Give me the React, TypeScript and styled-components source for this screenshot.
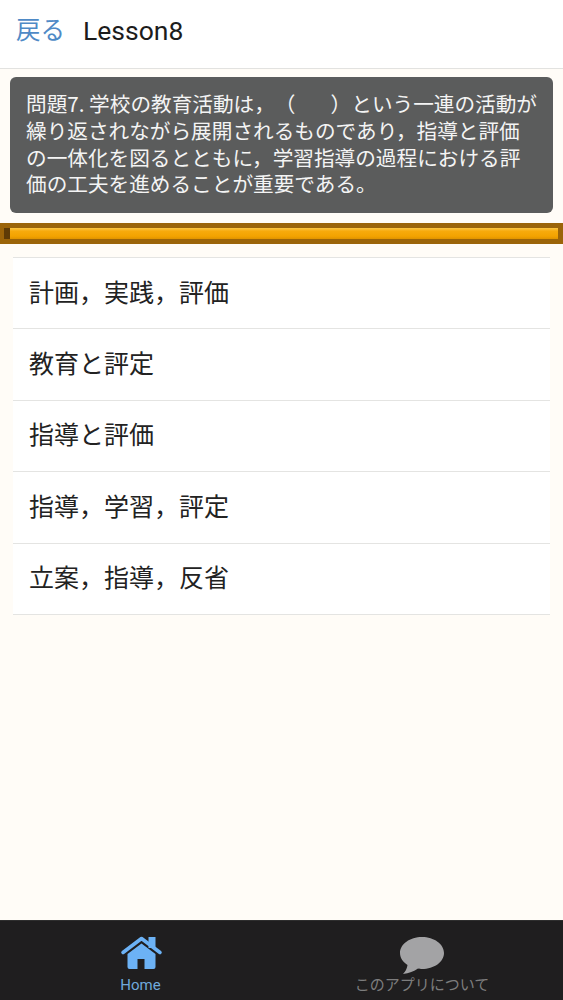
import styled, { createGlobalStyle } from "styled-components";

const GlobalStyle = createGlobalStyle`
  html, body {
    margin: 0;
    padding: 0;
    background: #fffcf7;
  }
  * {
    box-sizing: border-box;
  }
`;

const Page = styled.div`
  width: 563px;
  height: 1000px;
  display: flex;
  flex-direction: column;
  overflow: hidden;
  background: #fffcf7;
  font-family: "Roboto", "Noto Sans CJK JP", sans-serif;
`;

const Header = styled.header`
  height: 69px;
  flex: none;
  display: flex;
  align-items: center;
  gap: 18px;
  padding: 0 16px 6px;
  background: #ffffff;
  border-bottom: 1px solid #e2e2e0;
`;

const BackLink = styled.a`
  font-family: "Noto Sans CJK JP", sans-serif;
  font-size: 24.5px;
  line-height: 30px;
  color: #4f8ac6;
  margin-bottom: 5px;
`;

const Title = styled.h1`
  margin: 0;
  font-size: 26.5px;
  font-weight: 400;
  line-height: 30px;
  color: #1c1c1c;
`;

const Content = styled.main`
  flex: 1;
  display: flex;
  flex-direction: column;
  padding-top: 8px;
`;

const Question = styled.div`
  margin: 0 10px;
  height: 136px;
  padding: 13px 13px 0 16px;
  border-radius: 6px;
  background: #5b5c5c;
  color: #f4f4f4;
  font-family: "Noto Sans CJK JP", sans-serif;
  font-size: 20.65px;
  line-height: 26.8px;
  text-spacing-trim: space-all;
`;

const Track = styled.div`
  margin-top: 10px;
  height: 21px;
  flex: none;
  display: flex;
  align-items: center;
  padding: 0 5px 0 4px;
  background: #9b6409;
`;

const Knob = styled.div`
  width: 6px;
  height: 11px;
  flex: none;
  background: #5e3b06;
`;

const Fill = styled.div<{ $percent: number }>`
  width: ${(p) => p.$percent}%;
  height: 11px;
  background: linear-gradient(#fbc643 0%, #f7aa0c 30%, #f3a300 75%, #e09400 100%);
`;

const Choices = styled.ul`
  list-style: none;
  margin: 13px 13px 0;
  padding: 0;
  border-top: 1px solid #e4e4e2;
`;

const Choice = styled.li`
  height: 71.4px;
  display: flex;
  align-items: center;
  padding: 0 0 5px 16px;
  background: #ffffff;
  border-bottom: 1px solid #e4e4e2;
  color: #222222;
  font-family: "Noto Sans CJK JP", sans-serif;
  font-size: 25px;
  text-spacing-trim: space-all;
`;

const TabBar = styled.nav`
  height: 80px;
  flex: none;
  display: grid;
  grid-template-columns: 281px 1fr;
  background: #1f1e1f;
  border-top: 1px solid #2e2e2e;
`;

const Tab = styled.a<{ $active?: boolean }>`
  display: flex;
  flex-direction: column;
  align-items: center;
  padding-top: 15px;
  color: ${(p) => (p.$active ? "#6fa9dc" : "#7d7d7d")};
  font-family: "Roboto", "Noto Sans CJK JP", sans-serif;
  font-size: 15px;
  line-height: 18px;
`;

const TabIcon = styled.svg`
  width: 46px;
  height: 38px;
  display: block;
  margin-bottom: 2px;
`;

const question =
  "問題7. 学校の教育活動は，（\u3000\u2002\u2009）という一連の活動が繰り返されながら展開されるものであり，指導と評価の一体化を図るとともに，学習指導の過程における評価の工夫を進めることが重要である。";

const choices = ["計画，実践，評価", "教育と評定", "指導と評価", "指導，学習，評定", "立案，指導，反省"];

export default function App() {
  return (
    <Page>
      <GlobalStyle />
      <Header>
        <BackLink>戻る</BackLink>
        <Title>Lesson8</Title>
      </Header>
      <Content>
        <Question>{question}</Question>
        <Track>
          <Knob />
          <Fill $percent={100} />
        </Track>
        <Choices>
          {choices.map((c) => (
            <Choice key={c}>{c}</Choice>
          ))}
        </Choices>
      </Content>
      <TabBar>
        <Tab $active>
          <TabIcon viewBox="-2 0 46 38">
            <path fill="#6cb2f5" d="M28.5 1 H35.5 V12 H28.5 Z" />
            <path
              fill="none"
              stroke="#6cb2f5"
              strokeWidth="3.6"
              strokeLinecap="round"
              strokeLinejoin="round"
              d="M3 16.5 L21.5 2.5 L40 16.5"
            />
            <path
              fill="#6cb2f5"
              fillRule="evenodd"
              d="M21.5 7.5 L35.5 18 V31 a2 2 0 0 1 -2 2 H9.5 a2 2 0 0 1 -2 -2 V18 Z M17.5 23 V33 H24.5 V23 Z"
            />
          </TabIcon>
          Home
        </Tab>
        <Tab>
          <TabIcon viewBox="0 0 46 38">
            <path
              fill="#a3a3a5"
              d="M23 1 C35 1 45 8 45 17 C45 26 35 33 23 33 C21.5 33 20.5 33 19 32.6 C15 35.5 10 37.5 4 38 C6.5 35.5 8 32.5 8.5 29 C4 26 1 22 1 17 C1 8 11 1 23 1 Z"
            />
          </TabIcon>
          このアプリについて
        </Tab>
      </TabBar>
    </Page>
  );
}
